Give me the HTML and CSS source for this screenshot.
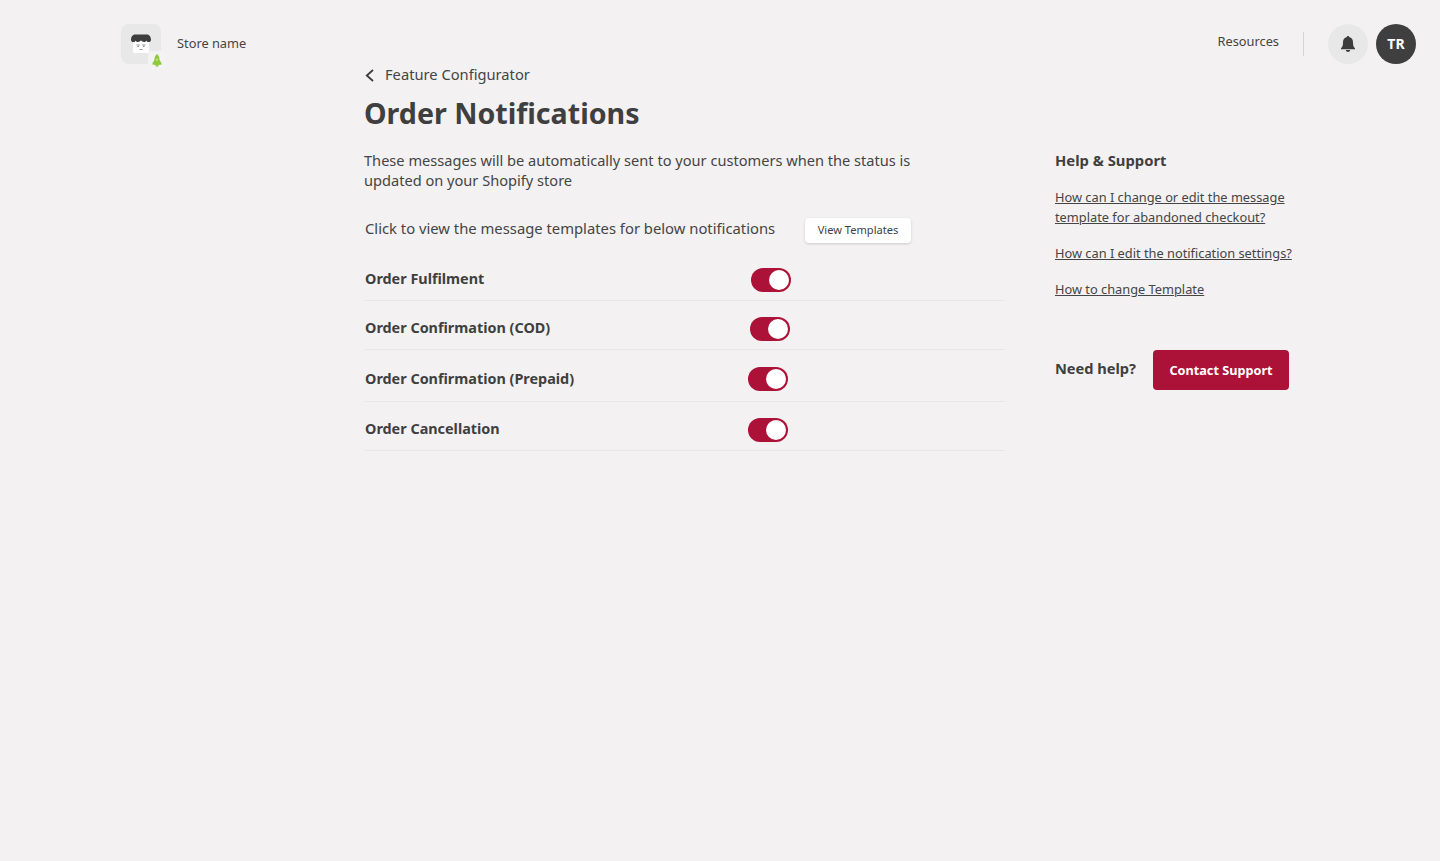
FILE: index.html
```html
<!DOCTYPE html>
<html lang="en">
<head>
<meta charset="utf-8">
<title>Order Notifications</title>
<link rel="stylesheet" href="styles.css">
</head>
<body>
<header class="topbar">
  <div class="store">
    <div class="store-logo">
      <svg class="shop-icon" width="22" height="22" viewBox="0 0 22 22">
        <rect x="3" y="6" width="16" height="14" rx="1.500" fill="#fff"/>
        <path d="M5 1.500h12c2.300 0 4 2.500 4 5.200 0 1.400-1.100 2.300-2.300 2.300-1.100 0-2-.6-2.400-1.600C15.900 8.500 15 9 14 9c-1.200 0-2.300-.7-3-1.700C10.300 8.300 9.200 9 8 9c-1 0-1.900-.5-2.300-1.600C5.300 8.400 4.400 9 3.300 9 2.100 9 1 8.100 1 6.700 1 4 2.700 1.500 5 1.500z" fill="#3d3d3d"/>
        <path d="M6.500 12h3.300M12.200 12h3.300M7.500 13.500h1.500M13 13.500h1.500M9.500 16.500h3" stroke="#777" stroke-width=".8" fill="none"/>
      </svg>
      <span class="rocket">
        <svg width="12" height="15" viewBox="0 0 14 16">
          <path d="M7 .5c2 1.800 3 4 3 7l2.200 3.500v2H9.500l-.5 1H5l-.5-1H1.800v-2L4 7.500c0-3 1-5.200 3-7z" fill="#8fca3c"/>
          <circle cx="7" cy="7" r="1.200" fill="#c9e69c"/>
          <path d="M5.500 14.500h3L7 16z" fill="#8fca3c"/>
        </svg>
      </span>
    </div>
    <span class="store-name">Store name</span>
  </div>
  <nav class="top-actions">
    <span class="resources">Resources</span>
    <span class="divider"></span>
    <button class="bell" aria-label="Notifications">
      <svg width="16" height="18" viewBox="0 0 16 18">
        <path d="M8 1c.7 0 1.200.5 1.200 1.100C11.600 2.700 13 4.700 13 7.200c0 3.300.6 4.700 2 6v1H1v-1c1.400-1.300 2-2.700 2-6 0-2.500 1.400-4.500 3.800-5.100C6.800 1.500 7.300 1 8 1z" fill="#3d3d3d"/>
        <path d="M5.800 15h4.400A2.200 2.200 0 0 1 8 17a2.200 2.200 0 0 1-2.200-2z" fill="#3d3d3d"/>
      </svg>
    </button>
    <span class="avatar"><span class="avatar-text">TR</span></span>
  </nav>
</header>

<div class="page">
  <main class="content">
    <a class="back">
      <svg class="back-icon" width="9" height="13" viewBox="0 0 9 13"><path d="M8 1 1.800 6.500 8 12" fill="none" stroke="#3d3d3d" stroke-width="1.800"/></svg>
      <span>Feature Configurator</span>
    </a>
    <h1 class="title">Order Notifications</h1>
    <p class="intro">These messages will be automatically sent to your customers when the status is updated on your Shopify store</p>
    <div class="templates">
      <span class="templates-text">Click to view the message templates for below notifications</span>
      <button class="templates-btn">View Templates</button>
    </div>
    <ul class="rows">
      <li class="row row-a"><span class="row-label">Order Fulfilment</span><span class="toggle toggle-a"></span></li>
      <li class="row row-b"><span class="row-label">Order Confirmation (COD)</span><span class="toggle toggle-b"></span></li>
      <li class="row row-c"><span class="row-label">Order Confirmation (Prepaid)</span><span class="toggle toggle-c"></span></li>
      <li class="row row-d"><span class="row-label">Order Cancellation</span><span class="toggle toggle-d"></span></li>
    </ul>
  </main>
  <aside class="help">
    <h2 class="help-title">Help &amp; Support</h2>
    <a class="help-link">How can I change or edit the message template for abandoned checkout?</a>
    <a class="help-link">How can I edit the notification settings?</a>
    <a class="help-link">How to change Template</a>
    <div class="need-help">
      <span class="need-text">Need help?</span>
      <button class="contact">Contact Support</button>
    </div>
  </aside>
</div>
</body>
</html>
```
FILE: styles.css
```css
* { box-sizing: border-box; }
html, body { margin: 0; height: 100%; }
body {
  background: #f3f1f2;
  color: #454545;
  font-family: "Noto Sans", "Open Sans", sans-serif;
  min-height: 861px;
  overflow: hidden;
}
button { font-family: inherit; border: 0; cursor: pointer; }

.topbar {
  display: flex;
  justify-content: space-between;
  align-items: flex-start;
  padding: 24px 24px 0 121px;
  height: 63px;
}
.store { display: flex; align-items: center; gap: 16px; }
.store-logo {
  position: relative;
  width: 40px;
  height: 40px;
  border-radius: 8px;
  background: #e8e8e8;
  display: flex;
  align-items: center;
  justify-content: center;
}
.rocket {
  position: absolute;
  right: -5px;
  bottom: -5px;
  width: 18px;
  height: 18px;
  border-radius: 4px;
  background: #f4f3f3;
  display: flex;
  align-items: center;
  justify-content: center;
}
.store-name { font-size: 12.800px; line-height: 20px; margin-top: -3px; }
.top-actions { display: flex; align-items: center; }
.resources { font-size: 12.800px; line-height: 20px; margin-top: -7px; }
.divider { width: 1px; height: 24px; background: #d4d4d4; margin: 0 24px; }
.bell {
  width: 40px;
  height: 40px;
  border-radius: 50%;
  background: #e8e8e8;
  padding: 0;
  display: flex;
  align-items: center;
  justify-content: center;
  margin-right: 8px;
}
.avatar {
  width: 40px;
  height: 40px;
  border-radius: 50%;
  background: #3f3f3f;
  color: #fff;
  font-size: 14px;
  font-weight: 700;
  display: flex;
  align-items: center;
  justify-content: center;
}
.avatar-text { margin-top: -2px; }

.page {
  display: flex;
  align-items: flex-start;
  padding-left: 364px;
}
.content { width: 641px; }
.back { display: flex; align-items: center; gap: 11px; height: 22px; font-size: 14.700px; margin-left: 1px; }
.back-icon { margin-top: 2px; }
.title { margin: 7px 0 0; font-size: 28.600px; line-height: 42px; font-weight: 700; color: #3f3f3f; }
.intro {
  margin: 16px 0 0;
  width: 570px;
  font-size: 14.600px;
  line-height: 20px;
}
.templates {
  display: flex;
  align-items: center;
  margin: 27px 0 0 1px;
  height: 26px;
}
.templates-text { width: 440px; font-size: 14.800px; margin-top: -4px; }
.templates-btn {
  width: 106px;
  height: 25px;
  background: #fff;
  color: #3f3f3f;
  font-size: 11.100px;
  border-radius: 4px;
  box-shadow: 0 1px 3px rgba(0, 0, 0, .16);
  padding: 0 0 2px;
}
.rows { list-style: none; margin: 13px 0 0 1px; padding: 0; }
.row {
  display: flex;
  align-items: center;
  border-bottom: 1px solid #e8e6e7;
  font-size: 14.400px;
  font-weight: 700;
  color: #3f3f3f;
}
.row-a { height: 45px; }
.row-b { height: 49px; padding-top: 4px; }
.row-c { height: 52px; padding-top: 6px; }
.row-d { height: 49px; padding-top: 4px; }
.row-label { white-space: nowrap; }
.toggle {
  position: relative;
  width: 40px;
  height: 24px;
  border-radius: 12px;
  background: #ac1237;
  margin-left: auto;
}
.toggle::after {
  content: "";
  position: absolute;
  top: 2px;
  right: 2px;
  width: 20px;
  height: 20px;
  border-radius: 50%;
  background: #fff;
}
.toggle-a { margin-right: 214px; margin-top: 4px; }
.toggle-b { margin-right: 215px; margin-top: 4px; }
.toggle-c { margin-right: 217px; }
.toggle-d { margin-right: 217px; margin-top: 4px; }

.help { margin-left: 50px; width: 250px; padding-top: 85px; }
.help-title { margin: 0 0 15px; font-size: 14.800px; line-height: 24px; font-weight: 700; color: #3f3f3f; }
.help-link {
  display: block;
  font-size: 12.800px;
  line-height: 20px;
  text-decoration: underline;
  margin-bottom: 16px;
}
.need-help { display: flex; align-items: center; margin-top: 51px; }
.need-text { font-size: 14.600px; font-weight: 700; width: 98px; margin-top: -5px; color: #3f3f3f; }
.contact {
  width: 136px;
  height: 40px;
  border-radius: 4px;
  background: #ac1237;
  color: #fff;
  font-size: 12.700px;
  font-weight: 700;
  padding: 0;
}
```
